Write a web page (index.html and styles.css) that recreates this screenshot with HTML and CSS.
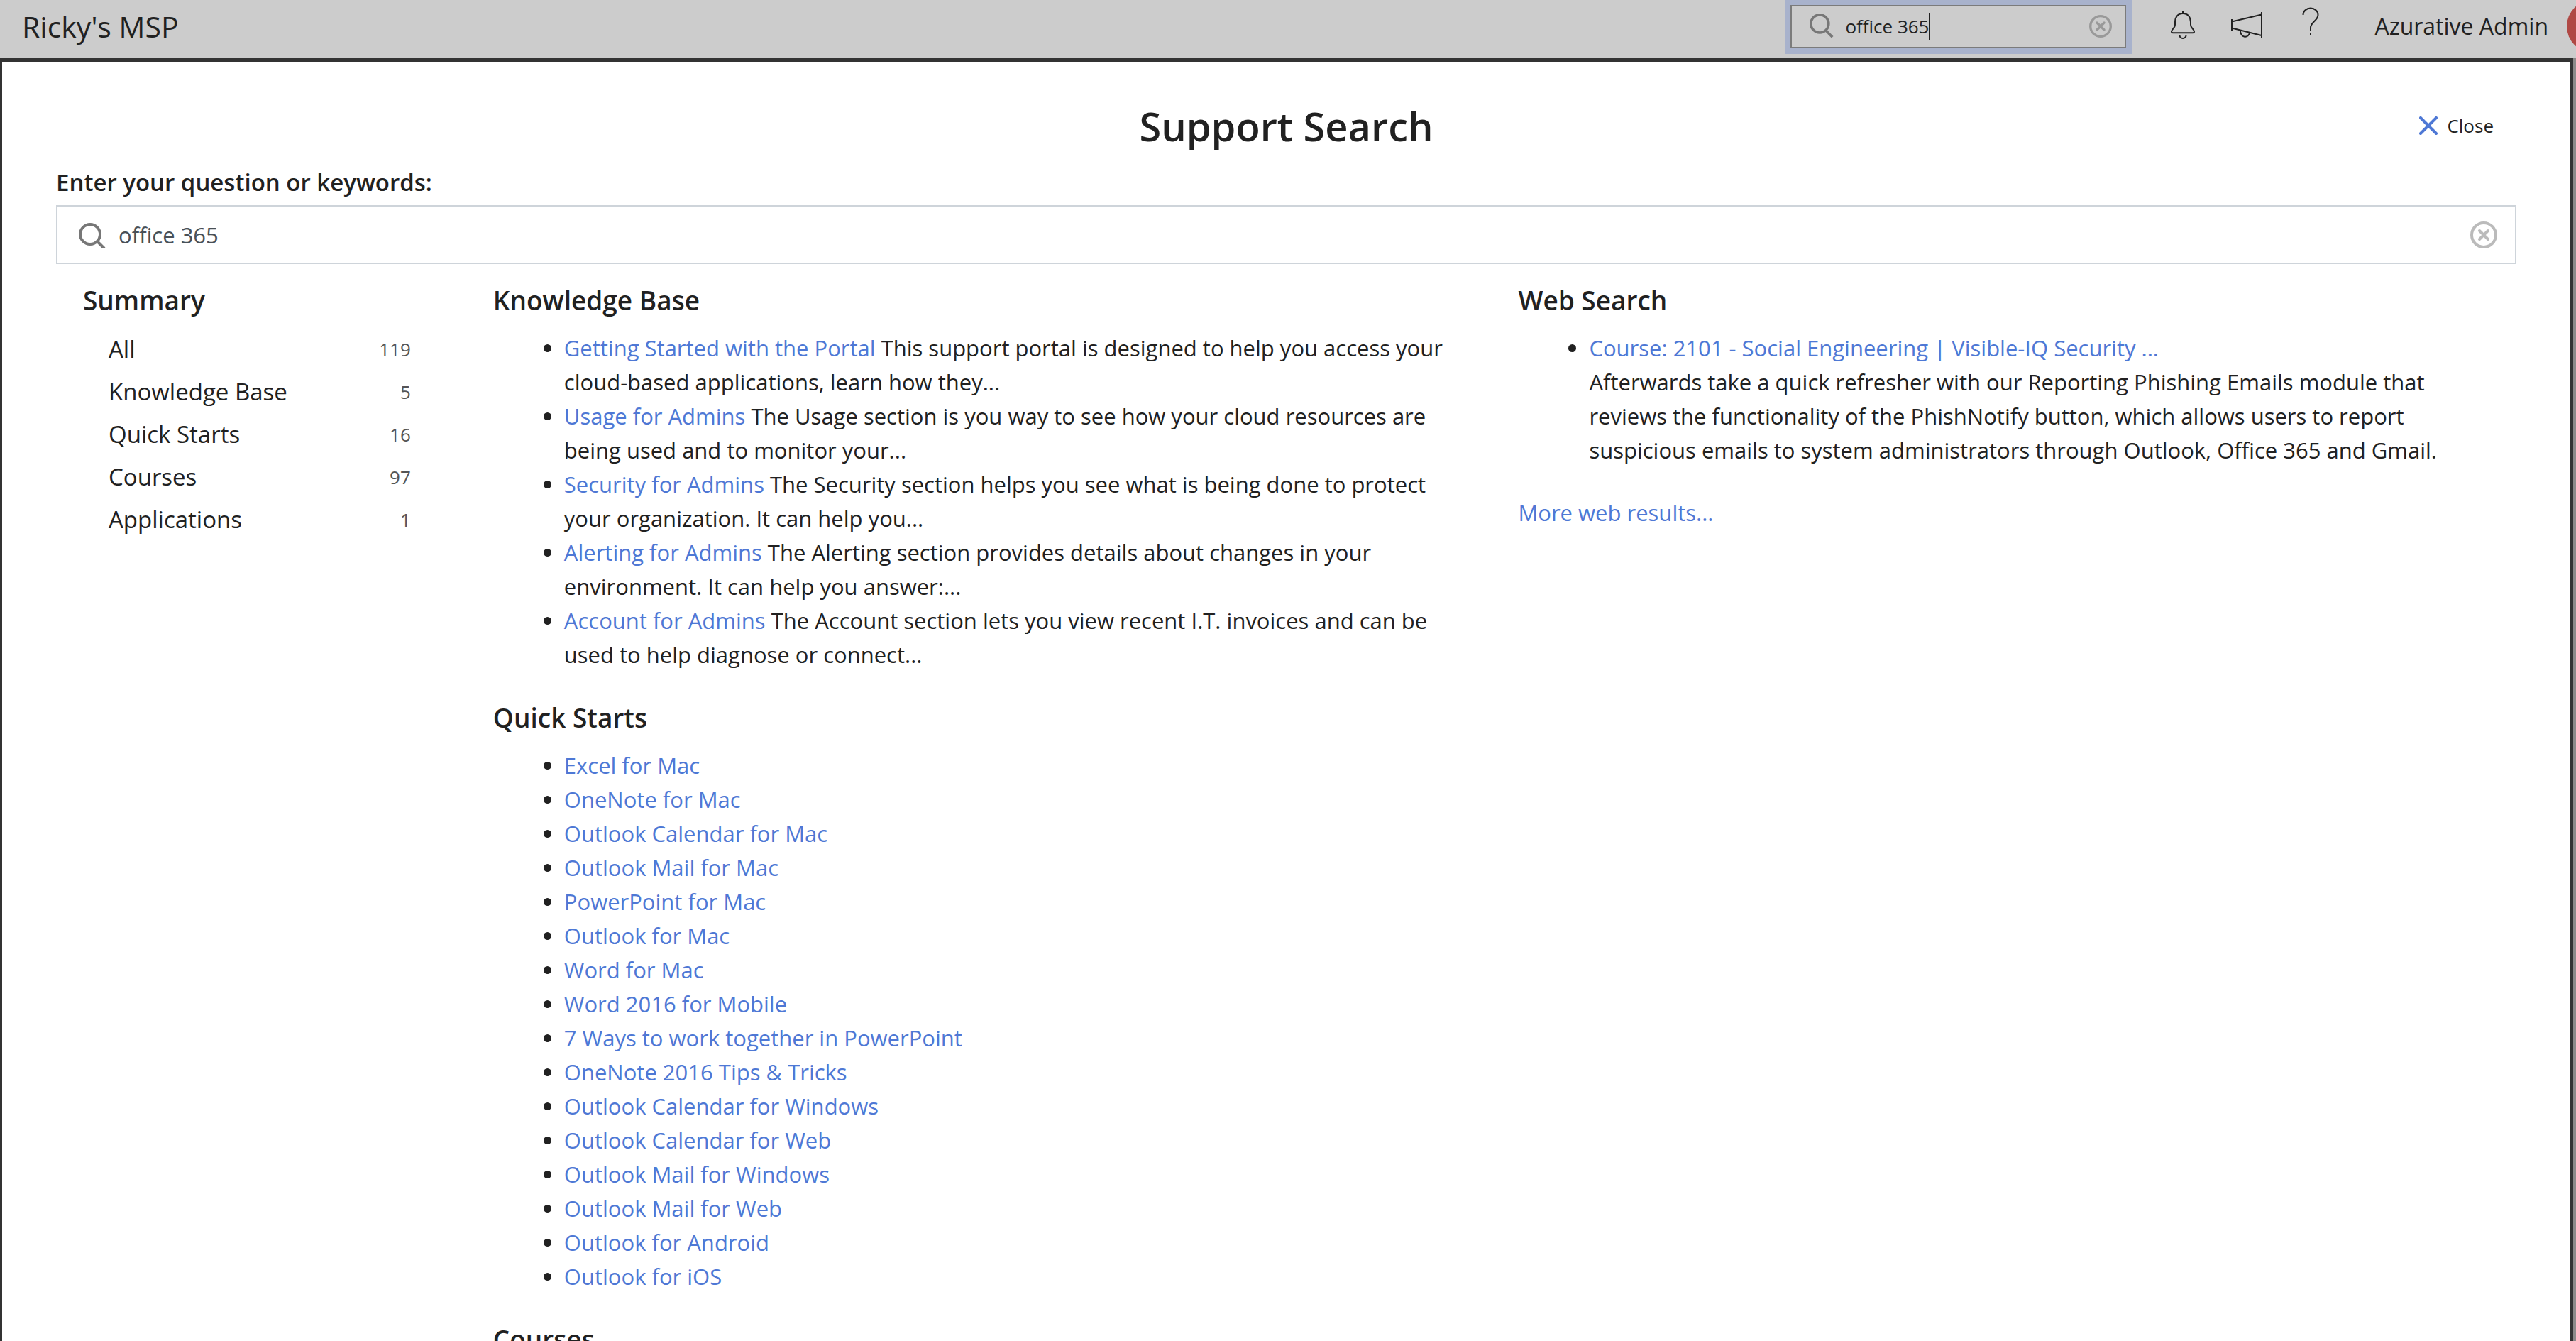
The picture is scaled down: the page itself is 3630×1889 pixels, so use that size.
FILE: index.html
```
<!DOCTYPE html>
<html lang="en">
<head>
    <meta charset="UTF-8">
    <meta name="viewport" content="width=device-width, initial-scale=1.0">
    <title>Support Search</title>
    <link rel="stylesheet" href="styles.css">
</head>
<body>
    <header class="topbar">
        <div class="brand">Ricky's MSP</div>
        <div class="search-box search-small">
            <svg class="icon-search" viewBox="0 0 38 38" aria-hidden="true">
                <circle cx="16" cy="15" r="14"/>
                <path d="M26 26l10 10"/>
            </svg>
            <input type="text" aria-label="Search" value="office 365">
            <span class="caret"></span>
            <button class="clear" aria-label="Clear">
                <svg viewBox="0 0 38 38" aria-hidden="true">
                    <circle cx="19" cy="19" r="17"/>
                    <path d="M13 13l12 12M25 13l-12 12"/>
                </svg>
            </button>
        </div>
        <nav class="tools">
            <button aria-label="Notifications">
                <svg viewBox="0 0 50 56" aria-hidden="true">
                    <path d="M25 6v4M25 10c-7 0-11 5-11 12v4c0 5-5 6-5 9.5 0 1 .8 1.8 2 1.8h28c1.2 0 2-.8 2-1.8 0-3.500-5-4.500-5-9.500v-4c0-7-4-12-11-12zM20.500 41a4.500 4 0 0 0 9 0"/>
                </svg>
            </button>
            <button aria-label="Announcements">
                <svg viewBox="0 0 50 56" aria-hidden="true">
                    <path d="M4 18v16M46 8v36M4 21.500l42-10M4 30.500l42 10.500M16 34c0 11 12 11 13 3.200"/>
                </svg>
            </button>
            <button aria-label="Help">
                <svg viewBox="0 0 50 56" aria-hidden="true">
                    <path d="M14.500 12A10.500 9.500 0 0 1 35.500 12C35.500 20 25 22 25 30v4M25 38v3"/>
                </svg>
            </button>
        </nav>
        <div class="account">Azurative Admin</div>
        <div class="avatar"></div>
    </header>

    <main class="panel">
        <div class="panel-header">
            <h1>Support Search</h1>
            <button class="close">
                <svg viewBox="0 0 26 26" aria-hidden="true"><path d="M2 2l22 22M24 2L2 24"/></svg>
                Close
            </button>
        </div>

        <label for="question">Enter your question or keywords:</label>
        <div class="search-box search-large">
            <svg class="icon-search" viewBox="0 0 38 38" aria-hidden="true">
                <circle cx="16" cy="18" r="14"/>
                <path d="M26 28l10 10"/>
            </svg>
            <input id="question" type="text" value="office 365">
            <button class="clear" aria-label="Clear">
                <svg viewBox="0 0 38 38" aria-hidden="true">
                    <circle cx="19" cy="19" r="17"/>
                    <path d="M13 13l12 12M25 13l-12 12"/>
                </svg>
            </button>
        </div>

        <div class="results">
            <section class="column">
                <h2>Summary</h2>
                <ul class="summary">
                    <li>All <span>119</span></li>
                    <li>Knowledge Base <span>5</span></li>
                    <li>Quick Starts <span>16</span></li>
                    <li>Courses <span>97</span></li>
                    <li>Applications <span>1</span></li>
                </ul>
            </section>

            <div class="column">
                <section>
                    <h2>Knowledge Base</h2>
                    <ul>
                        <li><a href="#">Getting Started with the Portal</a> This support portal is designed to help you access your cloud-based applications, learn how they...</li>
                        <li><a href="#">Usage for Admins</a> The Usage section is you way to see how your cloud resources are being used and to monitor your...</li>
                        <li><a href="#">Security for Admins</a> The Security section helps you see what is being done to protect your organization. It can help you...</li>
                        <li><a href="#">Alerting for Admins</a> The Alerting section provides details about changes in your environment. It can help you answer:...</li>
                        <li><a href="#">Account for Admins</a> The Account section lets you view recent I.T. invoices and can be used to help diagnose or connect...</li>
                    </ul>
                </section>
                <section>
                    <h2>Quick Starts</h2>
                    <ul>
                        <li><a href="#">Excel for Mac</a></li>
                        <li><a href="#">OneNote for Mac</a></li>
                        <li><a href="#">Outlook Calendar for Mac</a></li>
                        <li><a href="#">Outlook Mail for Mac</a></li>
                        <li><a href="#">PowerPoint for Mac</a></li>
                        <li><a href="#">Outlook for Mac</a></li>
                        <li><a href="#">Word for Mac</a></li>
                        <li><a href="#">Word 2016 for Mobile</a></li>
                        <li><a href="#">7 Ways to work together in PowerPoint</a></li>
                        <li><a href="#">OneNote 2016 Tips &amp; Tricks</a></li>
                        <li><a href="#">Outlook Calendar for Windows</a></li>
                        <li><a href="#">Outlook Calendar for Web</a></li>
                        <li><a href="#">Outlook Mail for Windows</a></li>
                        <li><a href="#">Outlook Mail for Web</a></li>
                        <li><a href="#">Outlook for Android</a></li>
                        <li><a href="#">Outlook for iOS</a></li>
                    </ul>
                </section>
                <section>
                    <h2>Courses</h2>
                </section>
            </div>

            <section class="column">
                <h2>Web Search</h2>
                <ul>
                    <li><a href="#">Course: 2101 - Social Engineering | Visible-IQ Security ...</a><br>Afterwards take a quick refresher with our Reporting Phishing Emails module that reviews the functionality of the PhishNotify button, which allows users to report suspicious emails to system administrators through Outlook, Office 365 and Gmail.</li>
                </ul>
                <p class="more"><a href="#">More web results...</a></p>
            </section>
        </div>
    </main>
</body>
</html>
```

FILE: styles.css
```
* {
    box-sizing: border-box;
}
body {
    margin: 0;
    height: 100vh;
    overflow: hidden;
    display: flex;
    flex-direction: column;
    font-family: "Open Sans", "Noto Sans", sans-serif;
    font-size: 31px;
    line-height: 48px;
    color: #212121;
    background-color: #8c8a89;
}
button {
    padding: 0;
    border: none;
    background: none;
    font: inherit;
    color: inherit;
    cursor: pointer;
}
svg {
    display: block;
    fill: none;
    stroke: currentColor;
}
a {
    color: #4e78d5;
    text-decoration: none;
}
h1, h2, ul, p {
    margin: 0;
}

/* Top bar */
.topbar {
    display: flex;
    align-items: center;
    flex: none;
    height: 82px;
    padding: 0 0 8px 31px;
    background-color: #ccc;
}
.brand {
    flex: 1;
    font-size: 41px;
}
.tools {
    display: flex;
    margin: 0 45px 0 35px;
}
.tools button {
    display: flex;
    justify-content: center;
    width: 90px;
}
.tools svg {
    width: 50px;
    height: 56px;
    stroke-width: 2;
}
.account {
    font-size: 32px;
}
.avatar {
    flex: none;
    width: 74px;
    height: 74px;
    margin: 0 -61px 0 26px;
    border-radius: 50%;
    background-color: #b04844;
}

/* Search boxes */
.search-box {
    display: flex;
    align-items: center;
}
.search-box input {
    flex: 1;
    min-width: 0;
    padding: 0;
    border: none;
    outline: none;
    background: none;
    font: inherit;
    color: inherit;
}
.icon-search {
    color: #777;
    stroke-width: 4;
}
.clear svg {
    width: 100%;
    stroke-width: 4;
    stroke-linecap: round;
}
.search-small {
    position: relative;
    width: 473px;
    height: 61px;
    padding: 0 18px 0 25px;
    gap: 16px;
    border: 2px solid #7b7b7b;
    box-shadow: 0 0 0 8px #a8b2cc;
    font-size: 26px;
}
.search-small .icon-search {
    width: 34px;
}
.search-small .clear {
    width: 32px;
    color: #999;
}
.caret {
    position: absolute;
    left: 193px;
    top: 10px;
    width: 2px;
    height: 37px;
    background-color: #212121;
}
.search-large {
    height: 83px;
    padding: 0 25px 0 30px;
    gap: 18px;
    border: 2px solid #ced4da;
    color: #495057;
}
.search-large .icon-search {
    width: 38px;
}
.search-large .clear {
    width: 38px;
    color: #bbb;
}

/* Panel */
.panel {
    flex: 1;
    min-height: 0;
    overflow: hidden;
    margin: 0 4px 0 -2px;
    padding: 48px 75px 0 76px;
    border: 5px solid #333;
    border-bottom: none;
    background-color: #fff;
}
.panel-header {
    display: grid;
    grid-template-columns: 1fr auto 1fr;
    align-items: center;
    margin-bottom: 14px;
}
.panel-header h1 {
    grid-column: 2;
    font-size: 56px;
    font-weight: 600;
    line-height: 84px;
}
.close {
    display: flex;
    align-items: center;
    justify-self: end;
    gap: 13px;
    margin-right: 32px;
    font-size: 26px;
}
.close svg {
    width: 26px;
    color: #4e78d5;
    stroke-width: 4;
    stroke-linecap: round;
}
label {
    display: block;
    margin-bottom: 8px;
    font-size: 33px;
    font-weight: 600;
}

/* Results */
.results {
    display: grid;
    grid-template-columns: 2fr 5fr 5fr;
    padding-top: 23px;
}
.column {
    padding: 0 38px;
}
.column > section {
    margin-bottom: 37px;
}
h2 {
    font-size: 37px;
    font-weight: 600;
    line-height: 56px;
}
ul {
    margin-top: 15px;
    padding: 0 10px 0 100px;
}
.summary {
    margin-top: 11px;
    padding: 0 40px 0 36px;
    list-style: none;
    font-size: 33px;
    line-height: 60px;
}
.summary li {
    display: flex;
    align-items: center;
    justify-content: space-between;
}
.summary span {
    font-size: 26px;
    color: #555;
}
.more {
    margin-top: 40px;
}
```
